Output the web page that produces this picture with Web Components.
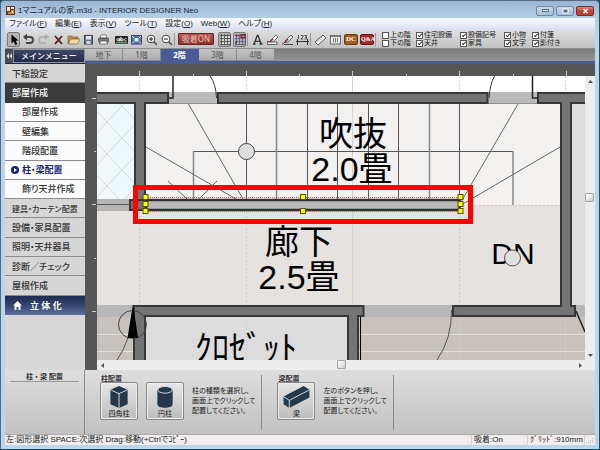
<!DOCTYPE html>
<html lang="ja">
<head>
<meta charset="utf-8">
<title>1マニュアルの家.m3d - INTERIOR DESIGNER Neo</title>
<style>
html, body { margin: 0; }
body { font-family: "Noto Sans", "Noto Sans CJK JP", sans-serif; font-size: 8px; color: #222; background: #0d5563; }
</style>
</head>
<body>
<app-window></app-window>

<script>
const RESET = `
  *, *::before, *::after { box-sizing: border-box; }
  button { font: inherit; color: inherit; margin: 0; padding: 0; border: 0; background: none; font-feature-settings: "palt"; }
  svg { display: block; }
`;
function define(name, css, markup) {
  customElements.define(name, class extends HTMLElement {
    constructor() {
      super();
      const html = typeof markup === "function" ? markup(this) : markup;
      this.attachShadow({ mode: "open" }).innerHTML = `<style>${RESET}${css}</style>${html}`;
    }
  });
}

/* ---------- title bar ---------- */
define("title-bar", `
  :host { display: flex; align-items: center; height: 18px; padding: 3px 1px 0 1px; gap: 3px; font-family: "Liberation Sans", "Noto Sans CJK JP", sans-serif; font-size: 8px; color: #1c2430; }
  h1 { font: inherit; margin: 0; flex: 1; line-height: 14px; white-space: nowrap; font-feature-settings: "palt"; }
  .btns { display: flex; gap: 2px; }
  .btns button { width: 18px; height: 10px; border: 1px solid #6f88a5; border-radius: 2px; background: linear-gradient(#c7d8ea, #a5bdd7); display: grid; place-items: center; }
  .btns .x { border-color: #7c2a22; background: linear-gradient(#d98776, #c0432f 50%, #b84a38); }
`, `
  <svg width="9" height="9" viewBox="0 0 9 9"><rect width="9" height="9" fill="#6b3518"/><path d="M1 1h3v4H1zM5 1h3v2H5z" fill="#f2e4cf"/><path d="M5 4h3v4H2V6h3z" fill="#cf8d4a"/><path d="M6 5h1v2H6z" fill="#fff"/></svg>
  <h1>1マニュアルの家.m3d - INTERIOR DESIGNER Neo</h1>
  <div class="btns">
    <button aria-label="最小化"><svg width="7" height="5"><rect x=".5" y="1.5" width="6" height="2" fill="#fff" stroke="#5b6f88"/></svg></button>
    <button aria-label="最大化"><svg width="7" height="6"><rect x="1" y="1" width="5" height="4" fill="#5b6f88" stroke="#fff"/></svg></button>
    <button class="x" aria-label="閉じる"><svg width="7" height="6"><path d="M1.500 1l4 4M5.500 1l-4 4" stroke="#fff" stroke-width="1.500"/></svg></button>
  </div>`);

/* ---------- menu bar ---------- */
define("menu-bar", `
  :host { display: flex; align-items: center; height: 12px; padding-left: 4px; gap: 8px; background: linear-gradient(#fafbfe, #d9dff0); font-family: "Liberation Sans", "Noto Sans CJK JP", sans-serif; font-size: 8px; color: #222; }
  button { line-height: 12px; white-space: nowrap; }
`, [["ファイル", "F"], ["編集", "E"], ["表示", "V"], ["ツール", "T"], ["設定", "O"], ["Web", "W"], ["ヘルプ", "H"]]
  .map(([t, k]) => `<button>${t}(<u>${k}</u>)</button>`).join(""));

/* ---------- tool bar ---------- */
const ICONS = {
  select: ["選択", `<path d="M3.500 1.500v9l2.200-2 1.800 3.500 1.800-1-1.800-3.300 3-.200z" fill="#000"/>`],
  undo: ["元に戻す", `<path d="M3 4h5a3 3 0 0 1 0 6H4" fill="none" stroke="#444" stroke-width="2"/><path d="M5 .500v7L1 4z" fill="#444"/>`],
  redo: ["やり直し", `<path d="M10 4H5a3 3 0 0 0 0 6h4" fill="none" stroke="#aaa" stroke-width="1.500"/><path d="M8 1v6l4-3z" fill="#aaa"/>`],
  del: ["削除", `<path d="M3 3l7 8M10 3l-7 8" stroke="#5a1a18" stroke-width="1.800"/>`],
  open: ["開く", `<path d="M1 3h4l1 1h5v2H4l-3 5z" fill="#b98f45" stroke="#775a26" stroke-width=".600"/><path d="M3.500 6H13l-2.500 5H1.500z" fill="#f0dba4" stroke="#775a26" stroke-width=".600"/>`],
  save: ["保存", `<rect x="2.500" y="2.500" width="8" height="8.500" fill="#6b747f" stroke="#3e4650"/><rect x="4" y="3" width="5" height="3.500" fill="#dfe6ee"/><rect x="4.500" y="8" width="4" height="3" fill="#cfd5dc"/>`],
  print: ["印刷", `<path d="M4 2h5l1 3H3z" fill="#fff" stroke="#555" stroke-width=".700"/><rect x="1.500" y="5" width="10" height="4.500" rx="1" fill="#777" stroke="#444" stroke-width=".700"/><path d="M3.500 8h6l1 3h-8z" fill="#f6f6f6" stroke="#555" stroke-width=".700"/>`],
  abc: ["文字", `<rect x="0" y="3" width="13" height="8" rx="1" fill="#222"/><rect x="1" y="9" width="11" height="1.500" fill="#5d9a6c"/><g fill="none" stroke="#fff" stroke-width=".900"><circle cx="3" cy="6.800" r="1.200"/><path d="M4.500 5.300v3M5.800 4v4.300M8.300 8.300"/><circle cx="7" cy="6.800" r="1.200"/><path d="M11.500 5.800a1.300 1.300 0 1 0 0 2"/></g>`],
  fit: ["全体表示", `<rect x="1.500" y="2.500" width="10" height="8.500" fill="#53719b" stroke="#344e74"/><rect x="4.500" y="5" width="4" height="3.500" fill="#dce8f6"/><path d="M2 3l2 2M11 3L9 5M2 10.500l2-2M11 10.500l-2-2" stroke="#dce8f6"/>`],
  zin: ["拡大", `<circle cx="6" cy="6" r="3.800" fill="#fff" stroke="#444"/><path d="M4 6h4M6 4v4" stroke="#222"/><path d="M8.800 8.800l3 3" stroke="#444" stroke-width="1.600"/>`],
  zout: ["縮小", `<circle cx="6" cy="6" r="3.800" fill="#fff" stroke="#444"/><path d="M4 6h4" stroke="#222"/><path d="M8.800 8.800l3 3" stroke="#444" stroke-width="1.600"/>`],
  grid: ["グリッド", `<rect x="2" y="2" width="9" height="9" fill="#d5d5d5"/><path d="M1 2.500h11M1 5.500h11M1 8.500h11M2.500 1v11M5.500 1v11M8.500 1v11M11.500 1v11M1 11.500h11" stroke="#444" stroke-width=".800"/>`],
  grid2: ["グリッド吸着", `<path d="M1 2.500h11M1 5.500h11M1 8.500h11M2.500 1v11M5.500 1v11M8.500 1v11M11.500 1v11M1 11.500h11" stroke="#535b78" stroke-width=".800"/><path d="M1 2.500h4M7 1.500h4v3H7zM2 9v2" stroke="#8a2434" stroke-width="1.200" fill="none"/>`],
  text: ["文字入力", `<path d="M3 11l3.300-8.500h.700L10.300 11M4.300 8.300h4.500M2 11h2.500M8.500 11h3" fill="none" stroke="#333" stroke-width="1.300"/>`],
  pen: ["ペン", `<path d="M5 7l5-5 2 2-5 5-3 .500z" fill="#f2f2ea" stroke="#555" stroke-width=".800"/><path d="M1 8.500l3 0M1.500 11.500V9h9.500v2.500z" fill="#eee" stroke="#555" stroke-width=".900"/><path d="M4 9l3-3" stroke="#7a3b30" stroke-width="1.500"/>`],
  pen2: ["線", `<path d="M5 7l5-5 2 2-5 5-3 .500z" fill="#e6e6e0" stroke="#444" stroke-width=".800"/><path d="M1 11.500l4-3M3 11.500h9" stroke="#444"/><path d="M4 9l3-3" stroke="#7a3b30" stroke-width="1.500"/>`],
  dim: ["寸法", `<path d="M1.500 6v6M11.500 6v6M0 8.500h13" stroke="#333" fill="none"/><path d="M2.500 2v4M5 2.500h2V4L5 6h2M8.500 2.500h2v3.500h-2M9 4.200h1.500" stroke="#333" stroke-width=".800" fill="none"/>`],
  ruler: ["定規", `<path d="M1 9l8-7 3 3-8 7z" fill="#f3f3ef" stroke="#4d4d4d" stroke-width=".900"/><path d="M3.500 7l1.300 1.300M5.300 5.500l1.300 1.300M7 4l1.300 1.300" stroke="#555" stroke-width=".700"/>`],
  table: ["表", `<rect x="1.500" y="2.500" width="10" height="8.500" fill="#ececec" stroke="#666"/><rect x="2" y="2" width="9" height="2" fill="#777"/><path d="M4.500 5v4.500M6.500 5v4.500M8.500 5v4.500" stroke="#777"/>`]
};
define("tool-button", `
  :host { display: block; }
  button { display: grid; place-items: center; width: 13px; height: 15px; }
  :host([pressed]) button { border: 1px solid #777; border-radius: 2px; background: #b4b4b4; }
`, el => { const [label, art] = ICONS[el.getAttribute("icon")];
  return `<button aria-label="${label}"><svg width="13" height="13" viewBox="0 0 13 13">${art}</svg></button>`; });

define("view-check", `
  :host { display: block; }
  label { display: flex; align-items: center; gap: 1px; height: 8px; line-height: 8px; white-space: nowrap; font-feature-settings: "palt"; }
  input { appearance: none; margin: 0; width: 7px; height: 7px; border: 1px solid #555; background: #fff; display: grid; place-items: center; }
  input:checked::after { content: ""; width: 4px; height: 2px; border: solid #333; border-width: 0 0 1px 1px; transform: rotate(-45deg); }
`, el => `<label><input type="checkbox" ${el.hasAttribute("checked") ? "checked" : ""}><slot></slot></label>`);

const tb = (...n) => n.map(i => `<tool-button icon="${i}"></tool-button>`).join("");
define("tool-bar", `
  :host { display: flex; align-items: center; height: 19px; padding-left: 2px; background: linear-gradient(#dedede, #c2c2c2); border-bottom: 1px solid #8d8d8d; }
  .g { display: flex; gap: 2px; }
  .g + .g { margin-left: 5px; }
  hr { width: 1px; height: 13px; margin: 0 3px 0 1px; border: 0; background: #999; }
  .snap { width: 36px; height: 12px; margin-right: 4px; border: 1px solid #6a2422; border-radius: 1px; background: linear-gradient(#b65750, #8d3330); color: #e9c2bd; font-size: 8px; line-height: 10px; }
  .badge { width: 14px; height: 11px; align-self: center; border: 1px solid #6b3a10; border-radius: 2px; background: #a05c1c; color: #fff; font: bold 7px/9px "Liberation Serif", serif; }
  .badge.q { border-color: #6b1518; background: #9c2a2e; font-size: 6px; }
  .checks { display: grid; grid-template-columns: 34px 44px 44px 28px auto; margin-left: 3px; font-size: 7px; color: #222; }
`, `
  <div class="g"><tool-button icon="select" pressed></tool-button>${tb("undo", "redo", "del", "open", "save", "print")}</div>
  <div class="g">${tb("abc", "fit", "zin", "zout")}</div><hr>
  <button class="snap">吸着ON</button>
  <div class="g"><tool-button icon="grid" pressed></tool-button><tool-button icon="grid2" pressed></tool-button></div><hr>
  <div class="g">${tb("text", "pen", "pen2", "dim")}</div><hr>
  <div class="g">${tb("ruler", "table")}<button class="badge">DC</button><button class="badge q">Q&amp;A</button></div><hr>
  <div class="checks">
    <view-check>上の階</view-check><view-check checked>住宅設備</view-check><view-check checked>設備記号</view-check><view-check checked>小物</view-check><view-check checked>付箋</view-check>
    <view-check>下の階</view-check><view-check checked>天井</view-check><view-check checked>家具</view-check><view-check checked>文字</view-check><view-check checked>影付き</view-check>
  </div>`);

/* ---------- side menu ---------- */
define("side-item", `
  :host { display: block; border-bottom: 1px solid #8c8c8c; background: #d6d6d6; color: #333; }
  button { display: flex; align-items: center; width: 100%; height: 100%; padding-left: 7px; font-size: 9px; font-weight: 500; white-space: nowrap; text-align: left; }
  :host([kind="head"]) { background: #3b3b3b; color: #fff; border-color: #3b3b3b; }
  :host([kind="sub"]), :host([kind="current"]) { background: #fcfcfc; }
  :host([kind="sub"]) button { padding-left: 17px; }
  :host([kind="long"]) button { font-size: 8px; }
  :host([kind="current"]) { color: #14247c; }
  :host([kind="current"]) button { padding-left: 6px; gap: 3px; font-weight: 700; }
  :host([kind="solid"]) { background: linear-gradient(#1f2c52, #35456f 50%, #5e6f99); color: #fff; border: 0; }
  :host([kind="solid"]) button { padding-left: 8px; gap: 8px; font-size: 9px; font-weight: 700; }
`, el => { const k = el.getAttribute("kind");
  const art = k === "current" ? `<svg width="8" height="8" viewBox="0 0 8 8"><circle cx="4" cy="4" r="4" fill="#14247c"/><path d="M3 2l3 2-3 2z" fill="#fff"/></svg>`
    : k === "solid" ? `<svg width="9" height="9" viewBox="0 0 9 9"><path d="M4.500 0L9 4.500H7.500V9h-2V6h-2v3h-2V4.500H0z" fill="#fff"/></svg>` : "";
  return `<button>${art}<span><slot></slot></span></button>`; });

define("side-menu", `
  :host { display: block; background: linear-gradient(#d3d3d3, #d8d8d8); }
  header { display: flex; height: 15px; border-bottom: 1px solid #222b44; }
  header button { width: 8px; background: #4c4c4c; display: grid; place-items: center; }
  h2 { flex: 1; margin: 0; border: 1px solid #8a93a8; background: linear-gradient(#3d4766, #232c49); color: #fff; font-size: 8px; font-weight: 500; line-height: 12px; text-align: center; }
  nav { display: grid; grid-auto-rows: 1fr; height: 251px; }
`, `
  <header><button aria-label="たたむ"><svg width="6" height="6"><path d="M3 0L.500 3 3 6zM6 0L3.500 3 6 6z" fill="#ddd"/></svg></button><h2>メインメニュー</h2></header>
  <nav>
    <side-item>下絵設定</side-item><side-item kind="head">部屋作成</side-item>
    <side-item kind="sub">部屋作成</side-item><side-item kind="sub">壁編集</side-item><side-item kind="sub">階段配置</side-item>
    <side-item kind="current">柱・梁配置</side-item><side-item kind="sub">飾り天井作成</side-item>
    <side-item kind="long">建具・カーテン配置</side-item><side-item>設備・家具配置</side-item><side-item>照明・天井器具</side-item>
    <side-item>診断／チェック</side-item><side-item>屋根作成</side-item><side-item kind="solid">立 体 化</side-item>
  </nav>`);

/* ---------- floor tabs ---------- */
define("floor-tabs", `
  :host { display: flex; height: 15px; background: linear-gradient(#7c7c7c, #969696); border-bottom: 3px solid #4b5b98; }
  button { width: 38px; border: solid #8b8b8b; border-width: 0 1px 1px 0; background: linear-gradient(#c2c2c2, #adadad); color: #555; font-size: 8px; line-height: 11px; }
  button[aria-selected="true"] { background: #4b5b98; border-color: #4b5b98; color: #fff; font-weight: 700; }
`, ["地下", "1階", "2階", "3階", "4階"].map((t, i) => `<button role="tab" aria-selected="${i === 2}">${t}</button>`).join(""));

/* ---------- floor plan ---------- */
const line = (pts, extra = "") => `<path d="${pts}" fill="none" ${extra}/>`;
const handle = ([x, y]) => `<rect x="${x - 2.5}" y="${y - 2.5}" width="5" height="5" fill="#ff0" stroke="#555000"/>`;
define("floor-plan", `
  :host { display: block; min-height: 0; background: #565656; }
  svg { width: 100%; height: 100%; }
  text { font-family: "Liberation Sans", "Noto Sans CJK JP", sans-serif; font-size: 34px; fill: #000; text-anchor: middle; }
  .dn { font-size: 30px; }
`, `
<svg viewBox="85 64 500 296" preserveAspectRatio="xMidYMid slice">
  <defs>
    <pattern id="lattice" x="107" y="122" width="30" height="32" patternUnits="userSpaceOnUse"><path d="M0 0l30 32M30 0L0 32" stroke="#d3dbd8"/></pattern>
  </defs>
  <rect x="97" y="76" width="488" height="284" fill="#fff"/>
  <!-- rooms -->
  <rect x="97" y="104" width="38" height="95" fill="#eff8fb"/><rect x="97" y="104" width="38" height="95" fill="url(#lattice)"/>
  <rect x="97" y="199" width="38" height="12" fill="#b5b5b5"/>
  <rect x="146" y="104" width="414" height="101" fill="#f2f1f0"/>
  <rect x="97" y="211" width="463" height="94" fill="#e6e2df"/><rect x="459" y="205" width="101" height="6" fill="#e6e2df"/>
  <rect x="572" y="104" width="13" height="201" fill="#dcdcdc"/>
  <rect x="97" y="305" width="488" height="12" fill="#b8b8b8"/>
  <rect x="97" y="317" width="488" height="43" fill="#c8c2bd"/>
  <path d="M97 334.500H585M97 351.500H585" stroke="#e3dfdb"/>
  <rect x="146" y="317" width="202" height="43" fill="#dcdcdc"/>
  <rect x="169" y="92" width="48" height="12" fill="#b9b9b9"/><rect x="488" y="92" width="49" height="12" fill="#b9b9b9"/>
  <path d="M169 103.500h48M488 103.500h49" stroke="#8f938f"/>
  <!-- guide lines -->
  <path d="M139.500 76V360M246.500 76V360M459.500 76V360M565.500 76V360" stroke="#d0cecc" stroke-dasharray="2 2"/>
  <path d="M352.500 76V305" stroke="#d4d2d0"/><path d="M459 205.500H560" stroke="#cfcbc7" stroke-dasharray="2 2"/>
  <!-- stairs -->
  <g stroke="#555"><path d="M246.500 104V199M307.500 104V199M337.500 104V199M368.500 104V199M398.500 104V199M459.500 104V199M193 151.500H513"/>
    <path d="M276.500 104V199M429.500 104V199M193.500 151V199M513 151V205" stroke="#888" stroke-width="1.500"/></g>
  ${line("M188.500 104L243 199M146 147L236 199M168 181L187 199M217 181L199 199M518 104L461 202M560 147L461 205", `stroke="#666"`)}
  <circle cx="246.500" cy="151.500" r="8" fill="#dedede" stroke="#444"/>
  <!-- walls -->
  <g fill="#747474" stroke="#373737" stroke-width="2">
    <path d="M95 93H168V103H145V206H135V103H95z"/><path d="M218 93H487.500V103H218z"/>
    <path d="M587 93H538V103H561V306H453V316H575V306H571V103H587z"/>
    <path d="M134 362V306H363.500V316H358V362H348V316H145V362z"/>
    <path d="M130 200H146V210H130z"/>
  </g>
  <path d="M360.500 317V360" stroke="#000"/><path d="M97 204.500h33" stroke="#555"/>
  <!-- doors -->
  ${line("M173 76V98H169M532.500 76V98H537", `stroke="#222" stroke-width="1.500"`)}
  ${line("M210 76Q216 84 216.500 98M494.500 76Q490 84 489 98", `stroke="#333"`)}
  ${line("M451.500 310Q452 338 437 360M128 338Q124 350 117 360", `stroke="#555"`)}
  ${line("M576 311L585 332", `stroke="#222" stroke-width="1.500"`)}
  <!-- north mark -->
  <circle cx="132.500" cy="324.500" r="14" fill="none" stroke="#444"/><path d="M133 304l5 34h-10.500z" fill="#000"/>
  <!-- room names -->
  <text x="353" y="146">吹抜</text>
  <text x="352" y="181">2.0畳</text>
  <text x="299" y="254">廊下</text>
  <text x="299" y="289">2.5畳</text>
  <text x="246" y="360">ｸﾛｾﾞｯﾄ</text>
  <text class="dn" x="513" y="264">DN</text>
  <circle cx="512.500" cy="258" r="8" fill="#e2e0de" stroke="#555"/>
  <!-- selected beam -->
  <path d="M146 200H459.500V210H146z" fill="#b9b9b9" stroke="#333" stroke-width="2.500"/>
  <path d="M146 197.500H460M146 211.500H460" stroke="#e06060" stroke-dasharray="1 1"/>
  ${[[145.5, 197], [145.5, 204], [145.5, 211], [303, 197], [303, 211], [460.5, 197], [460.5, 204], [460.5, 211]].map(handle).join("")}
  <rect x="135.500" y="187.500" width="335" height="34" fill="none" stroke="#f00" stroke-width="5"/>
  <!-- rulers -->
  <path d="M85 64H585V76H97V360H85z" fill="#565656"/>
  <path d="M139.500 71v5M246.500 71v5M352.500 71v5M459.500 71v5M566.500 71v5M193.500 74v2M299.500 74v2M406.500 74v2M513.500 74v2M92 98.500h4M92 204.500h4M92 311.500h4M94 151.500h2M94 258.500h2" stroke="#c8c8c8"/>
</svg>`);

/* ---------- scroll bar ---------- */
define("scroll-bar", `
  :host { display: flex; background: #ededed; }
  :host([dir="v"]) { flex-direction: column; width: 10px; border-top: 12px solid #565656; }
  :host([dir="h"]) { height: 10px; }
  button { width: 10px; height: 10px; display: grid; place-items: center; }
  .thumb { width: 9px; height: 9px; border: 1px solid #a5a5a5; border-radius: 1px; background: linear-gradient(135deg, #fff, #ccc); }
  .before { flex: var(--before, 1); } .after { flex: var(--after, 1); }
`, el => { const v = el.getAttribute("dir") === "v";
  const [a, b] = v ? ["M0 4L2.500 1 5 4z", "M0 1L2.500 4 5 1z"] : ["M4 0L1 2.500 4 5z", "M1 0L4 2.500 1 5z"];
  const btn = (d, l) => `<button aria-label="${l}"><svg width="5" height="5"><path d="${d}" fill="#555"/></svg></button>`;
  return `${btn(a, "戻る")}<span class="before"></span><span class="thumb"></span><span class="after"></span>${btn(b, "進む")}`; });

/* ---------- parts panel ---------- */
const PARTS = {
  square: `<path d="M13 0l9 4v15l-9 4-9-4V4z" fill="#24384a"/><path d="M4 4l9 4 9-4M13 8v15" fill="none" stroke="#d6dde2"/>`,
  round: `<path d="M5 4v15c0 5 16 5 16 0V4z" fill="#24384a"/><ellipse cx="13" cy="4" rx="7.500" ry="3.500" fill="#24384a" stroke="#d6dde2"/>`,
  beam: `<path d="M0 11L21 0l6 4v8L6 23l-6-4z" fill="#24384a"/><path d="M0 11l6 4 21-11M6 15v8" fill="none" stroke="#d6dde2"/>`
};
define("part-button", `
  :host { display: block; }
  button { display: flex; flex-direction: column; align-items: center; justify-content: space-between; width: 38px; height: 38px; padding: 3px 0 0; border: 1px solid #8a8a8a; border-radius: 2px; background: linear-gradient(#e6e6e6, #bdbdbd); box-shadow: inset 0 0 0 1px #ececec; font-size: 7px; line-height: 11px; color: #222; }
`, el => `<button><svg width="27" height="23" viewBox="0 0 27 23">${PARTS[el.getAttribute("part")]}</svg><slot></slot></button>`);

define("part-group", `
  :host { display: flex; flex-direction: column; height: 55px; padding-right: 6px; border-right: 1px solid #8c8c8c; }
  h3 { margin: 0; font-size: 7px; line-height: 7px; height: 7px; font-weight: 700; color: #333; padding-left: 1px; }
  .row { display: flex; align-items: center; gap: 8px; }
  p { margin: 0; font-size: 7px; line-height: 10px; white-space: nowrap; color: #222; font-feature-settings: "palt"; }
`, el => `<h3>${el.getAttribute("label")}</h3><div class="row"><slot></slot><p>${el.getAttribute("lead")}<br>画面上でクリックして<br>配置してください。</p></div>`);

define("parts-panel", `
  :host { display: grid; grid-template-columns: 80px 1fr; height: 64px; background: linear-gradient(#dedede, #c1c1c1); }
  .name { padding: 3px 5px 0; border-right: 1px solid #8a8a8a; }
  h2 { margin: 0; font-size: 7px; line-height: 8px; font-weight: 700; text-align: center; border-bottom: 1px solid #999; color: #333; }
  .groups { display: flex; gap: 15px; padding: 5px 0 0 15px; }
`, `
  <div class="name"><h2>柱・梁 配置</h2></div>
  <div class="groups">
    <part-group label="柱配置" lead="柱の種類を選択し、"><part-button part="square">四角柱</part-button><part-button part="round">円柱</part-button></part-group>
    <part-group label="梁配置" lead="左のボタンを押し、"><part-button part="beam">梁</part-button></part-group>
  </div>`);

/* ---------- status bar ---------- */
define("status-bar", `
  :host { display: flex; height: 11px; background: #f0edec; border-top: 1px solid #aaa; font-family: "Liberation Sans", "Noto Sans CJK JP", sans-serif; font-size: 8px; line-height: 10px; color: #222; white-space: nowrap; font-feature-settings: "palt"; }
  .msg { flex: 1; padding-left: 1px; }
  .snap { width: 56px; padding-left: 2px; border-left: 1px solid #d5d2d0; }
  .grid { width: 58px; padding-left: 2px; border: solid #d5d2d0; border-width: 0 1px; }
  svg { margin: 2px 1px 0; }
`, `
  <span class="msg">左:図形選択 SPACE:次選択 Drag:移動(+Ctrlでｺﾋﾟｰ)</span>
  <span class="snap">吸着:On</span><span class="grid">ｸﾞﾘｯﾄﾞ:910mm</span>
  <svg width="8" height="8"><path d="M6 1h1v1H6zM4 3h1v1H4zM6 3h1v1H6zM2 5h1v1H2zM4 5h1v1H4zM6 5h1v1H6z" fill="#b5b2b0"/></svg>`);

/* ---------- window ---------- */
define("app-window", `
  :host { display: block; padding: 0 1px 1px 0; }
  .frame { display: grid; grid-template-rows: auto auto auto 1fr auto auto; min-height: calc(100vh - 1px); padding: 0 4px 4px; border: 1px solid #56687c; border-width: 1px 0 0 1px; border-radius: 4px 4px 0 0; background: linear-gradient(#98b5d4, #b7cfe8 18px, #bbd5ee 40px); }
  .frame > title-bar { margin-top: -1px; }
  .work { display: grid; grid-template-columns: 80px 1fr; min-height: 0; }
  .main { display: grid; grid-template: auto 1fr auto / 1fr auto; min-height: 0; min-width: 0; }
  floor-tabs, .bottom { grid-column: 1 / -1; }
  floor-plan { height: 0; min-height: 100%; }
  .bottom { display: flex; padding-right: 10px; border-left: 12px solid #565656; background: #ededed; }
  .bottom scroll-bar { flex: 1; }
  .v { --before: 106; --after: 147; } .h { --before: 230; --after: 229; }
`, `
  <div class="frame">
    <title-bar></title-bar><menu-bar></menu-bar><tool-bar></tool-bar>
    <div class="work">
      <side-menu></side-menu>
      <div class="main">
        <floor-tabs></floor-tabs>
        <floor-plan></floor-plan><scroll-bar class="v" dir="v"></scroll-bar>
        <div class="bottom"><scroll-bar class="h" dir="h"></scroll-bar></div>
      </div>
    </div>
    <parts-panel></parts-panel>
    <status-bar></status-bar>
  </div>`);
</script>
</body>
</html>
